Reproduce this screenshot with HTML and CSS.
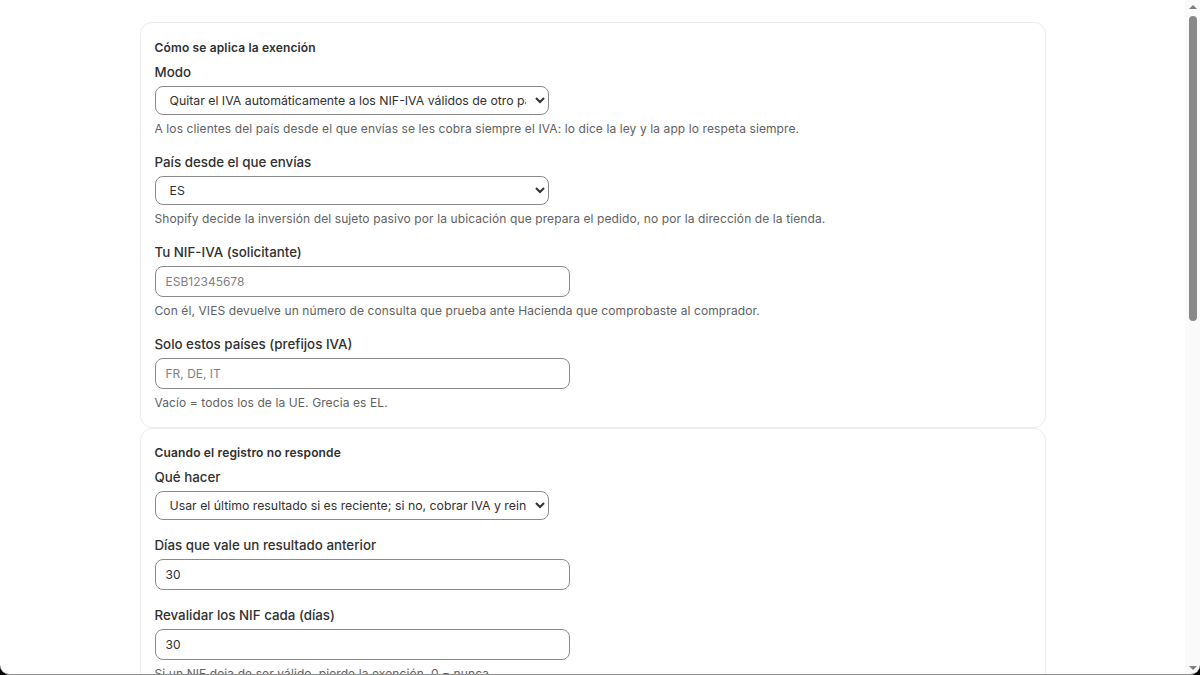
FILE: index.html
```html
<!DOCTYPE html>
<html lang="es">
<head>
<meta charset="utf-8">
<title>Exención de IVA</title>
<link rel="stylesheet" href="styles.css">
</head>
<body>
<main class="page">
  <section class="card">
    <h2 class="card-title">Cómo se aplica la exención</h2>
    <div class="field">
      <label class="label" for="modo">Modo</label>
      <select id="modo" class="select">
        <option>Quitar el IVA automáticamente a los NIF-IVA válidos de otro país de la UE</option>
      </select>
      <p class="help">A los clientes del país desde el que envías se les cobra siempre el IVA: lo dice la ley y la app lo respeta siempre.</p>
    </div>
    <div class="field">
      <label class="label" for="pais">País desde el que envías</label>
      <select id="pais" class="select">
        <option>ES</option>
      </select>
      <p class="help">Shopify decide la inversión del sujeto pasivo por la ubicación que prepara el pedido, no por la dirección de la tienda.</p>
    </div>
    <div class="field">
      <label class="label" for="nif">Tu NIF-IVA (solicitante)</label>
      <input id="nif" class="input" type="text" placeholder="ESB12345678">
      <p class="help">Con él, VIES devuelve un número de consulta que prueba ante Hacienda que comprobaste al comprador.</p>
    </div>
    <div class="field">
      <label class="label" for="paises">Solo estos países (prefijos IVA)</label>
      <input id="paises" class="input" type="text" placeholder="FR, DE, IT">
      <p class="help">Vacío = todos los de la UE. Grecia es EL.</p>
    </div>
  </section>

  <section class="card">
    <h2 class="card-title">Cuando el registro no responde</h2>
    <div class="field">
      <label class="label" for="hacer">Qué hacer</label>
      <select id="hacer" class="select">
        <option>Usar el último resultado si es reciente; si no, cobrar IVA y reintentar</option>
      </select>
    </div>
    <div class="field">
      <label class="label" for="dias">Días que vale un resultado anterior</label>
      <input id="dias" class="input" type="text" value="30">
    </div>
    <div class="field">
      <label class="label" for="reval">Revalidar los NIF cada (días)</label>
      <input id="reval" class="input" type="text" value="30">
      <p class="help">Si un NIF deja de ser válido, pierde la exención. 0 = nunca.</p>
    </div>
  </section>
</main>
<div class="scrollbar" aria-hidden="true">
  <span class="sb-arrow sb-up"></span>
  <span class="sb-thumb"></span>
  <span class="sb-space"></span>
  <span class="sb-arrow sb-down"></span>
</div>
<div class="frame" aria-hidden="true"></div>
</body>
</html>
```

FILE: styles.css
```css
* { box-sizing: border-box; }

html, body {
  margin: 0;
  padding: 0;
  background: #ffffff;
}

body {
  font-family: Inter, "Noto Sans", "Liberation Sans", sans-serif;
  color: #303030;
  padding-right: 15px;
}

.page {
  width: 906px;
  margin: 0 auto;
  padding: 22px 0 730px;
  display: flex;
  flex-direction: column;
  gap: 0;
}

.card {
  border: 1px solid #ececec;
  border-radius: 12px;
  padding: 16px 14px 16px;
  display: flex;
  flex-direction: column;
  gap: 15px;
}

.card + .card {
  padding-top: 15px;
}

.card-title {
  margin: 0 0 -10px;
  font-size: 12px;
  line-height: 18px;
  font-weight: 600;
  letter-spacing: 0.15px;
  color: #303030;
}

.field {
  display: flex;
  flex-direction: column;
  align-items: flex-start;
}

.label {
  font-size: 13.33px;
  line-height: 20px;
  font-weight: 500;
  color: #303030;
  margin-bottom: 4px;
}

.select {
  width: 394px;
  height: 29px;
  border: 1px solid #8a8a8a;
  border-radius: 8px;
  background: #ffffff;
  font-family: inherit;
  font-size: 12.3px;
  color: #303030;
  padding: 0 6px 0 10px;
}

.input {
  width: 415px;
  height: 31px;
  border: 1px solid #8a8a8a;
  border-radius: 8px;
  background: #ffffff;
  font-family: inherit;
  font-size: 12px;
  color: #303030;
  padding: 0 10px;
}

.input::placeholder {
  color: #7f7f7f;
}

.help {
  margin: 6px 0 0;
  font-size: 12px;
  line-height: 16px;
  letter-spacing: 0.1px;
  color: #616161;
}

/* imitation of the browser's classic scrollbar */
.scrollbar {
  position: fixed;
  top: 0;
  right: 0;
  width: 15px;
  height: 100vh;
  background: #fafafa;
  display: flex;
  flex-direction: column;
  align-items: center;
}

.sb-arrow {
  flex: 0 0 15px;
  width: 15px;
  display: flex;
  justify-content: center;
}

.sb-up::before,
.sb-down::before {
  content: "";
  width: 0;
  height: 0;
  border-left: 4px solid transparent;
  border-right: 4px solid transparent;
}

.sb-up::before {
  margin-top: 5px;
  border-bottom: 4px solid #7d7d7d;
}

.sb-down::before {
  margin-top: 6px;
  border-top: 4px solid #7d7d7d;
}

.sb-thumb {
  flex: 0 0 305px;
  width: 8px;
  margin: 1px 0 0 1px;
  border-radius: 4px;
  background: #898989;
}

.sb-space {
  flex: 1 1 auto;
}

.frame {
  position: fixed;
  left: 0;
  top: 0;
  width: 100vw;
  height: 100vh;
  pointer-events: none;
  border-bottom: 1px solid #8e8e8e;
  border-radius: 0 0 10px 10px;
  box-shadow: 0 0 0 30px #000000;
}
```
